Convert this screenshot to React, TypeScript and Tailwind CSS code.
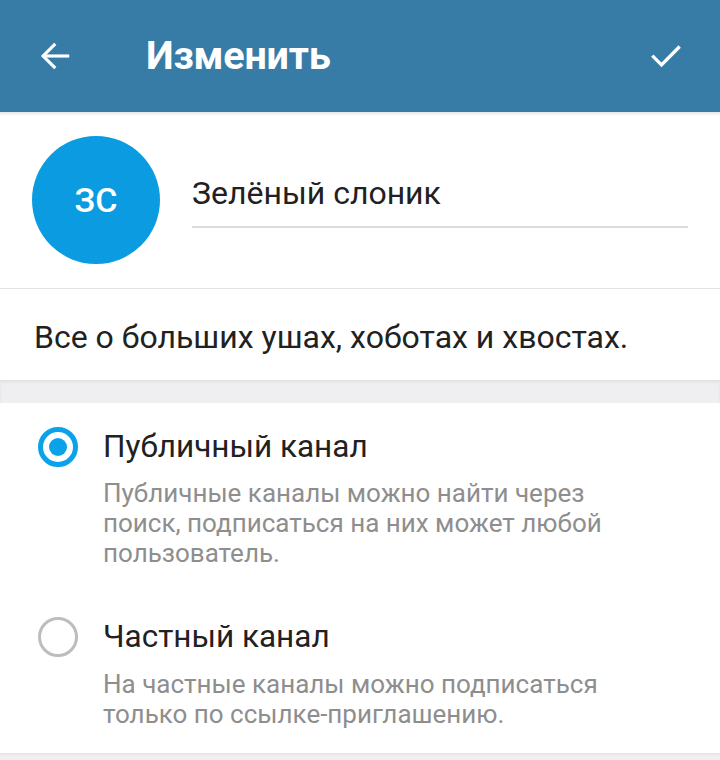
import React from "react";

export default function App() {
  return (
    <div className="w-[720px] h-[760px] overflow-hidden bg-[#efeef1]" style={{ fontFamily: "Roboto, 'Noto Sans', sans-serif" }}>
      {/* Header */}
      <div className="relative h-[112px] bg-[#377ca6] flex items-center">
        <div className="w-[146px] pl-[36px] flex items-center">
          <svg width="38" height="38" viewBox="0 0 24 24" fill="none" stroke="white" strokeWidth="2" strokeLinecap="square">
            <path d="M20 12H5" />
            <path d="M11.5 5L4.5 12L11.5 19" />
          </svg>
        </div>
        <div className="flex-1 text-white text-[39.5px] font-bold tracking-[-0.2px] leading-none">Изменить</div>
        <div className="pr-[34px] flex items-center">
          <svg width="40" height="40" viewBox="0 0 24 24" fill="none" stroke="white" strokeWidth="2" strokeLinecap="square">
            <path d="M4.5 12.5L9.3 17.3L19.5 7" />
          </svg>
        </div>
        <div className="absolute left-0 right-0 top-full h-[4px] bg-gradient-to-b from-[#0000001a] to-transparent" />
      </div>

      <div className="bg-white">
        {/* Avatar + name */}
        <div className="flex items-center h-[176px] pl-[32px] pr-[32px]">
          <div className="w-[128px] h-[128px] rounded-full bg-[#0b9be0] flex items-center justify-center text-white text-[34px] font-medium shrink-0">
            ЗС
          </div>
          <div className="ml-[32px] flex-1 flex flex-col pt-[2px]">
            <div className="text-[32px] text-[#212121] leading-[38px]">Зелёный слоник</div>
            <div className="mt-[14px] h-[2px] bg-[#dcdcdc]" />
          </div>
        </div>
        <div className="h-px bg-[#e2e2e2]" />

        {/* Description */}
        <div className="h-[91px] flex items-center pl-[34px] pt-[4px]">
          <div className="text-[32px] text-[#212121] leading-[40px]">Все о больших ушах, хоботах и хвостах.</div>
        </div>
      </div>

      {/* Gray separator */}
      <div className="h-[23px] bg-[#efeef1] shadow-[inset_0_2px_3px_rgba(0,0,0,0.06)]" />

      {/* Options */}
      <div className="bg-white flex flex-col pt-[24px] pb-[24px]">
        <div className="flex">
          <div className="w-[103px] pl-[38px] h-[40px] flex items-center">
            <div className="w-[40px] h-[40px] rounded-full border-[5px] border-[#0aa3ea] flex items-center justify-center">
              <div className="w-[18px] h-[18px] rounded-full bg-[#0aa3ea]" />
            </div>
          </div>
          <div className="flex-1">
            <div className="text-[31.5px] text-[#212121] leading-[40px]">Публичный канал</div>
            <div className="mt-[11px] text-[26px] leading-[30px] text-[#8e8e8e] w-[510px]">
              Публичные каналы можно найти через поиск, подписаться на них может любой пользователь.
            </div>
          </div>
        </div>
        <div className="flex mt-[49px]">
          <div className="w-[103px] pl-[38px] h-[40px] flex items-center">
            <div className="w-[40px] h-[40px] rounded-full border-[3px] border-[#bdbdbd]" />
          </div>
          <div className="flex-1">
            <div className="text-[31.5px] text-[#212121] leading-[40px]">Частный канал</div>
            <div className="mt-[12px] text-[26px] leading-[30px] text-[#8e8e8e] w-[510px]">
              На частные каналы можно подписаться только по ссылке-приглашению.
            </div>
          </div>
        </div>
      </div>
      <div className="h-[3px] bg-gradient-to-b from-[#0000000d] to-transparent" />
    </div>
  );
}
